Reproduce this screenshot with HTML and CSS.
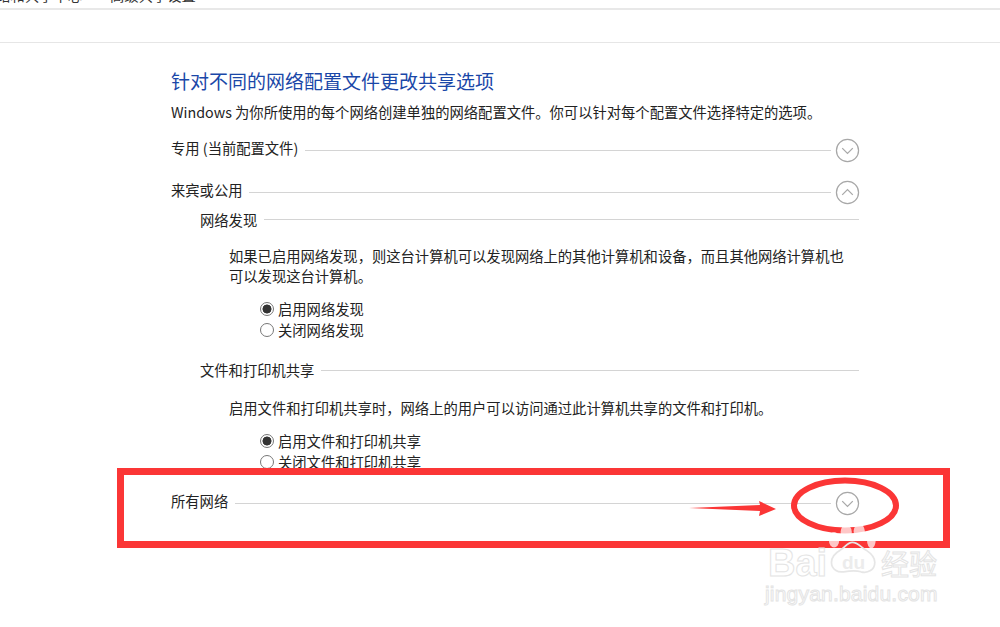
FILE: index.html
```html
<!DOCTYPE html>
<html>
<head>
    <meta charset="UTF-8">
    <title>高级共享设置</title>
    <link rel="stylesheet" href="styles.css">
</head>
<body>
    <div class="breadcrumb"><span>网络和共享中心</span><span>高级共享设置</span></div>
    <div class="toolbar"></div>

    <div class="content">
        <h1>针对不同的网络配置文件更改共享选项</h1>
        <p class="intro">Windows 为你所使用的每个网络创建单独的网络配置文件。你可以针对每个配置文件选择特定的选项。</p>

        <div class="group-row row-private">
            <span>专用 (当前配置文件)</span>
            <i class="line"></i>
            <svg class="toggle" viewBox="0 0 26 26"><circle cx="13" cy="13" r="11.5"/><path d="M7.5 10.5 13 16l5.5-5.5"/></svg>
        </div>

        <div class="group-row row-guest">
            <span>来宾或公用</span>
            <i class="line"></i>
            <svg class="toggle" viewBox="0 0 26 26"><circle cx="13" cy="13" r="11.5"/><path d="M7.5 15.5 13 10l5.5 5.5"/></svg>
        </div>

        <div class="clipped">
            <div class="sub-row sub-network"><span>网络发现</span><i class="line"></i></div>
            <p class="desc">如果已启用网络发现，则这台计算机可以发现网络上的其他计算机和设备，而且其他网络计算机也可以发现这台计算机。</p>
            <div class="options">
                <div class="option"><b class="radio checked"></b>启用网络发现</div>
                <div class="option"><b class="radio"></b>关闭网络发现</div>
            </div>

            <div class="sub-row sub-share"><span>文件和打印机共享</span><i class="line"></i></div>
            <p class="desc desc-share">启用文件和打印机共享时，网络上的用户可以访问通过此计算机共享的文件和打印机。</p>
            <div class="options">
                <div class="option"><b class="radio checked"></b>启用文件和打印机共享</div>
                <div class="option"><b class="radio"></b>关闭文件和打印机共享</div>
            </div>
        </div>

        <div class="group-row row-all">
            <span>所有网络</span>
            <i class="line"></i>
            <svg class="toggle" viewBox="0 0 26 26"><circle cx="13" cy="13" r="11.5"/><path d="M7.5 10.5 13 16l5.5-5.5"/></svg>
        </div>
    </div>

    <!-- annotations on top of the screenshot -->
    <div class="red-box"></div>
    <svg class="marks" viewBox="0 0 1000 627">
        <polygon points="689,508 760,505 759,501 776,509 759,516 760,511"/>
        <ellipse cx="845" cy="505.5" rx="51" ry="25"/>
    </svg>
    <div class="watermark">
        <svg class="paw" viewBox="0 0 60 60">
            <ellipse class="toe" cx="7" cy="17" rx="6" ry="9"/>
            <ellipse class="toe" cx="21" cy="8" rx="6.5" ry="8"/>
            <ellipse class="toe" cx="36" cy="7" rx="6.5" ry="8"/>
            <ellipse class="toe" cx="50" cy="18" rx="5" ry="9"/>
            <path class="pad" d="M28 20c-6 0-8 6-14 9C7 33 4 38 4 43c0 9 8 12 14 11 6-1 14-2 20 0 8 2 16-2 16-11 0-6-4-10-10-14-6-3-9-9-16-9z"/>
        </svg>
        <div class="wm-main"><span class="wm-bai">Bai</span><span class="wm-du">du</span><span class="wm-jy">经验</span></div>
        <div class="wm-url">jingyan.baidu.com</div>
    </div>
</body>
</html>
```

FILE: styles.css
```css
body {
    margin: 0;
    height: 627px;
    overflow: hidden;
    position: relative;
    background-color: #ffffff;
    color: #222222;
    font-family: "Noto Sans CJK SC", "Noto Sans", sans-serif;
    font-size: 14.3px;
}

.breadcrumb {
    display: flex;
    gap: 28px;
    height: 8px;
    overflow: hidden;
    border-bottom: 2px solid #e8e8e8;
    margin-left: -18px;
    line-height: 8px;
    color: #333333;
}

.breadcrumb span {
    display: block;
    margin-top: -9px;
    white-space: nowrap;
}

.toolbar {
    height: 32px;
    border-bottom: 1px solid #e6e6e6;
}

.content {
    width: 688px;
    margin-left: 171px;
}

h1 {
    margin: 24px 0 0;
    font-size: 19px;
    font-weight: normal;
    line-height: 28px;
    color: #1a47a8;
}

.intro {
    margin: 7px 0 0;
    line-height: 20px;
    white-space: nowrap;
}

.group-row,
.sub-row {
    display: flex;
    align-items: center;
    line-height: 18px;
}

.group-row span,
.sub-row span {
    white-space: nowrap;
}

/* the labels sit a little above their rule */
.group-row span {
    margin-bottom: 5px;
}

.line {
    flex: 1;
    height: 1px;
    background-color: #d4d4d4;
    margin-left: 7px;
}

.toggle {
    width: 25px;
    height: 25px;
    margin-left: 4px;
    margin-right: -1px;
    flex: none;
}

.toggle circle,
.toggle path {
    fill: none;
    stroke: #a8a8a8;
    stroke-width: 1.3;
}

.row-private {
    margin-top: 16px;
}

.row-guest {
    margin-top: 17px;
}

.clipped {
    height: 270px;
    overflow: hidden;
}

.sub-row {
    margin: 5px 0 0 29px;
}

.sub-network {
    margin-bottom: 1px;
}

.sub-network span {
    margin-top: 1px;
}

.desc {
    width: 620px;
    margin: 17px 0 0 58px;
    line-height: 20px;
}

.desc-share {
    margin-top: 19px;
    white-space: nowrap;
}

.options {
    margin: 12px 0 0 88px;
}

.option {
    display: flex;
    align-items: center;
    height: 21px;
}

.radio {
    width: 12px;
    height: 12px;
    border: 1.5px solid #777777;
    border-radius: 50%;
    margin: 0 4px 0 1px;
    flex: none;
}

.radio.checked {
    background: radial-gradient(circle, #333333 0 4.2px, #ffffff 4.8px);
}

.sub-share {
    margin-top: 21px;
}

.row-all {
    margin-top: 16px;
}

/* annotations */
.red-box {
    position: absolute;
    left: 117px;
    top: 468px;
    width: 819px;
    height: 66px;
    border: 7px solid #fb3636;
}

.marks {
    position: absolute;
    left: 0;
    top: 0;
    width: 1000px;
    height: 627px;
}

.marks polygon {
    fill: #fb3636;
}

.marks ellipse {
    fill: none;
    stroke: #fb3636;
    stroke-width: 6;
}

.watermark {
    position: absolute;
    left: 765px;
    top: 525px;
    width: 180px;
    height: 85px;
    color: #ffffff;
}

.paw {
    position: absolute;
    left: 63px;
    top: 0;
    width: 52px;
    height: 52px;
}

.paw .toe {
    fill: #ffffff;
    opacity: 0.72;
}

.paw .pad {
    fill: none;
    stroke: #e6e6e6;
    stroke-width: 2;
}

.wm-main {
    position: absolute;
    left: 3px;
    top: 20px;
    display: flex;
    align-items: center;
    height: 36px;
    white-space: nowrap;
    font-family: "Liberation Sans", sans-serif;
    -webkit-text-stroke: 1px #e4e4e4;
}

.wm-bai {
    width: 63px;
    font-size: 38px;
    font-weight: bold;
}

.wm-du {
    width: 50px;
    padding-left: 11px;
    box-sizing: border-box;
    font-size: 19px;
    font-weight: bold;
    color: #ececec;
    -webkit-text-stroke: 0;
}

.wm-jy {
    font-family: "Noto Sans CJK SC", sans-serif;
    font-size: 28px;
    font-weight: normal;
}

.wm-url {
    position: absolute;
    left: 0;
    top: 56px;
    white-space: nowrap;
    font-family: "Liberation Sans", sans-serif;
    font-size: 21px;
    letter-spacing: 0.2px;
    line-height: 26px;
    -webkit-text-stroke: 1px #e4e4e4;
}
```
